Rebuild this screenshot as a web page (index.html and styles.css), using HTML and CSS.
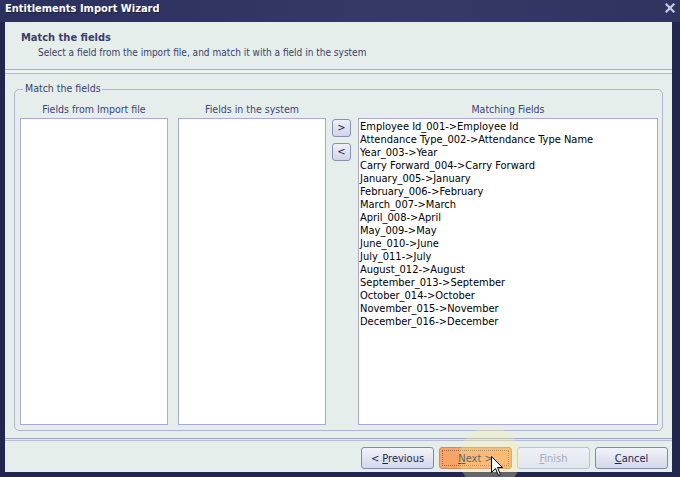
FILE: index.html
```html
<!DOCTYPE html>
<html>
<head>
<meta charset="utf-8">
<link rel="stylesheet" href="styles.css">
</head>
<body>
<div class="window">
  <div class="titlebar">
    <span class="title">Entitlements Import Wizard</span>
    <svg class="close" width="10" height="10" viewBox="0 0 10 10"><path d="M1.5 1.5 L8.5 8.5 M8.5 1.5 L1.5 8.5" stroke="#c9cde0" stroke-width="2.2" stroke-linecap="square"/></svg>
  </div>
  <div class="client">
    <div class="header">
      <div class="h-title">Match the fields</div>
      <div class="h-sub">Select a field from the import file, and match it with a field in the system</div>
    </div>
    <div class="sep"></div>
    <div class="body">
      <div class="group">
        <span class="legend">Match the fields</span>
        <div class="col col-a">
          <div class="colhead">Fields from Import file</div>
          <div class="list"></div>
        </div>
        <div class="col col-b">
          <div class="colhead">Fields in the system</div>
          <div class="list"></div>
        </div>
        <div class="arrows">
          <div class="abtn">&gt;</div>
          <div class="abtn">&lt;</div>
        </div>
        <div class="col col-c">
          <div class="colhead">Matching Fields</div>
          <div class="list items">
            <div>Employee Id_001-&gt;Employee Id</div>
            <div>Attendance Type_002-&gt;Attendance Type Name</div>
            <div>Year_003-&gt;Year</div>
            <div>Carry Forward_004-&gt;Carry Forward</div>
            <div>January_005-&gt;January</div>
            <div>February_006-&gt;February</div>
            <div>March_007-&gt;March</div>
            <div>April_008-&gt;April</div>
            <div>May_009-&gt;May</div>
            <div>June_010-&gt;June</div>
            <div>July_011-&gt;July</div>
            <div>August_012-&gt;August</div>
            <div>September_013-&gt;September</div>
            <div>October_014-&gt;October</div>
            <div>November_015-&gt;November</div>
            <div>December_016-&gt;December</div>
          </div>
        </div>
      </div>
    </div>
    <div class="footer-sep"></div>
    <div class="footer">
      <div class="btn"><span>&lt; <u>P</u>revious</span></div>
      <div class="btn btn-next"><span class="focus"><span><u>N</u>ext &gt;</span></span></div>
      <div class="btn btn-disabled"><span><u>F</u>inish</span></div>
      <div class="btn"><span><u>C</u>ancel</span></div>
    </div>
  </div>
  <div class="glow"></div>
  <svg class="cursor" width="13" height="21" viewBox="0 0 13 21"><path d="M0.5 0.5 L0.5 16.5 L4.5 12.5 L7.5 19.5 L9.5 18.5 L6.5 11.5 L11.5 11.5 Z" fill="#ffffff" stroke="#000000" stroke-width="1" stroke-linejoin="miter"/></svg>
</div>
</body>
</html>
```

FILE: styles.css
```css
* { box-sizing: border-box; }
html, body { margin: 0; padding: 0; }
body {
  background: #22264f;
  font-family: "DejaVu Sans Condensed", "DejaVu Sans", sans-serif;
  font-size: 11px;
  line-height: 13px;
  color: #000;
}
.window {
  position: relative;
  width: 680px;
  height: 477px;
  display: flex;
  flex-direction: column;
  background: #23274f;
  overflow: hidden;
}
.titlebar {
  height: 22px;
  flex: none;
  display: flex;
  justify-content: space-between;
  align-items: flex-start;
  padding: 2px 8px 0 5px;
  background: linear-gradient(90deg, #2c305d 0%, #343968 60%, #2f335f 100%);
}
.title {
  color: #ffffff;
  font-weight: bold;
  font-size: 11px;
  text-shadow: 1px 1px 0 #1a1d3c;
}
.close { margin-top: 1px; margin-right: -3px; }
.client {
  flex: 1;
  margin: 0 8px 5px 5px;
  background: #e6eeec;
  display: flex;
  flex-direction: column;
}
.header {
  height: 47px;
  flex: none;
  padding: 9px 0 0 16px;
  color: #3a3d6b;
}
.h-title {
  font-weight: bold;
  font-size: 11px;
}
.h-sub {
  margin-top: 2px;
  padding-left: 17px;
  font-size: 10px;
}
.sep {
  height: 5px;
  flex: none;
  border-top: 1px solid #a9adc6;
  border-bottom: 1px solid #b3b7d2;
  background: #eef2f2;
}
.body {
  flex: 1;
  display: flex;
  flex-direction: column;
  padding: 15px 9px 7px 9px;
}
.group {
  position: relative;
  flex: 1;
  display: flex;
  border: 1px solid #b0b4d4;
  border-radius: 5px;
  padding: 13px 4px 5px 5px;
}
.legend {
  position: absolute;
  top: -8px;
  left: 8px;
  padding: 0 1px 0 2px;
  background: #e6eeec;
  color: #3a3d6b;
  font-size: 10.5px;
}
.col {
  display: flex;
  flex-direction: column;
}
.col-a, .col-b { width: 148px; }
.col-b { margin-left: 10px; }
.col-c { width: 300px; margin-left: 7px; }
.colhead {
  text-align: center;
  color: #3f4275;
  height: 15px;
  font-size: 10.5px;
}
.list {
  flex: 1;
  background: #ffffff;
  border: 1px solid #a9a9d4;
}
.items { padding: 1px 2px 1px 1px; }
.arrows {
  width: 19px;
  margin-left: 6px;
  padding-top: 16px;
  display: flex;
  flex-direction: column;
  gap: 6px;
}
.abtn {
  height: 18px;
  border: 1px solid #8a8fb2;
  border-radius: 3px;
  background: linear-gradient(#eef0f8, #cfd4e6);
  text-align: center;
  line-height: 15px;
  color: #1f2350;
}
.footer-sep {
  height: 3px;
  flex: none;
  border-top: 1px solid #a3a7c4;
  border-bottom: 1px solid #b9bdd4;
  background: #dfe6ea;
}
.footer {
  height: 31px;
  flex: none;
  display: flex;
  justify-content: flex-end;
  gap: 5px;
  padding: 6px 4px 0 0;
}
.btn {
  width: 73px;
  height: 22px;
  border: 1px solid #8389ad;
  border-radius: 3px;
  background: linear-gradient(#f1f3f9, #d3d8e8);
  color: #22264f;
  display: flex;
  align-items: center;
  justify-content: center;
  white-space: pre;
}
.btn u { text-decoration-thickness: 1px; text-underline-offset: 1px; }
.btn-next {
  background: #f8a466;
  border-color: #c98c64;
  padding: 2px;
}
.btn-next .focus {
  flex: 1;
  align-self: stretch;
  border: 1px dotted #9a6a4a;
  display: flex;
  align-items: center;
  justify-content: center;
}
.btn-disabled {
  color: #a6aabf;
  border-color: #bcc0d4;
  background: linear-gradient(#eef1f6, #e0e5ee);
}
.glow {
  position: absolute;
  left: 459px;
  top: 427px;
  width: 62px;
  height: 62px;
  border-radius: 50%;
  background: rgba(255, 243, 160, 0.3);
  pointer-events: none;
}
.cursor {
  position: absolute;
  left: 491px;
  top: 456px;
}
```
